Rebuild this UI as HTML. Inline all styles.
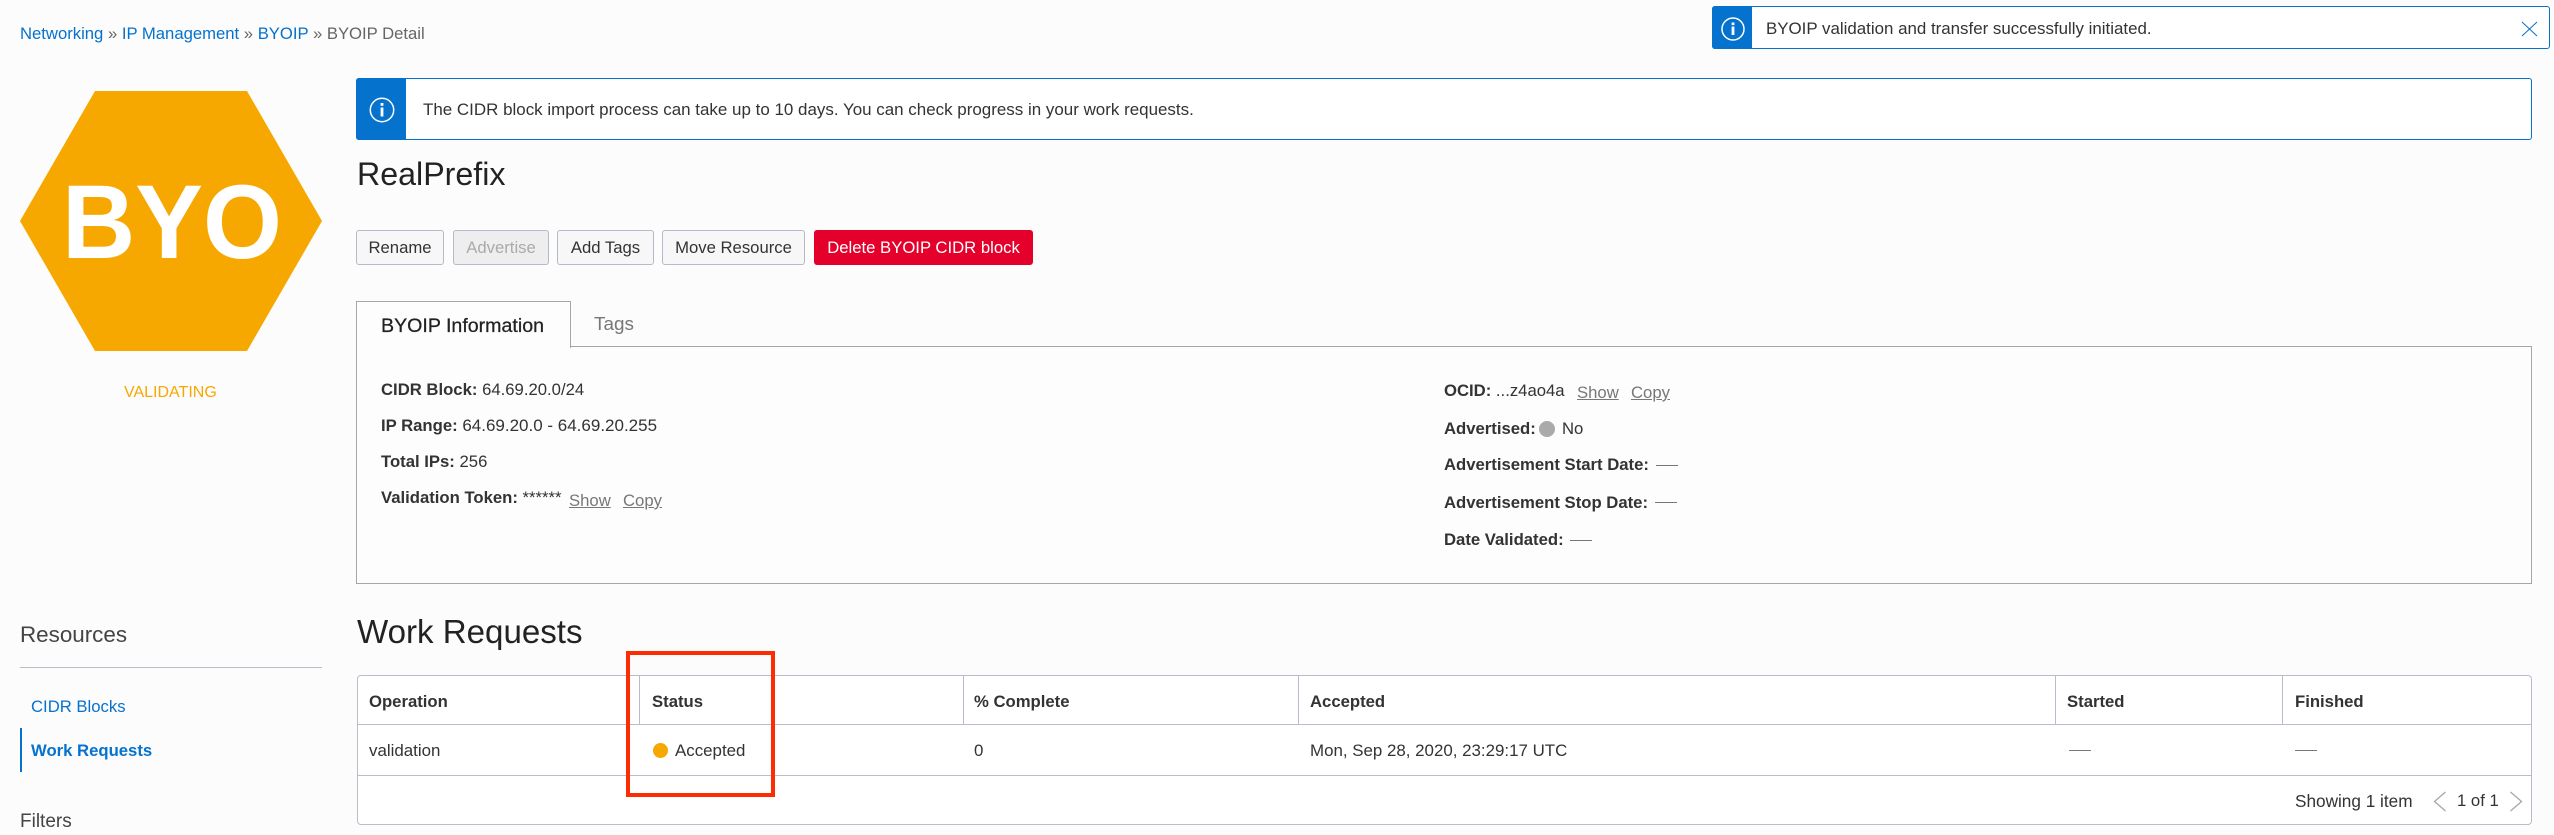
<!DOCTYPE html>
<html><head><meta charset="utf-8"><title>BYOIP Detail</title>
<style>
html,body{margin:0;padding:0;width:2554px;height:835px;overflow:hidden;background:#fcfcfc;font-family:"Liberation Sans",sans-serif;color:#333;}
.t{position:absolute;white-space:nowrap;line-height:20px;font-size:16.7px;}
.b{font-weight:bold}
.a{color:#0572ce}
.g{color:#777;text-decoration:underline}
.box{position:absolute;box-sizing:border-box}
.btn{position:absolute;box-sizing:border-box;top:230px;height:35px;border:1px solid #b4bac8;border-radius:3px;background:#f7f7f7;font-size:16.7px;line-height:33px;text-align:center;white-space:nowrap;color:#333}
.v{position:absolute;top:675px;width:1px;height:49px;background:#b9bdc9}
.d{position:absolute;width:22px;height:1px;background:#777}
</style></head><body>

<div class="t" style="left:20px;top:24px;font-size:16.67px;color:#666"><span class="a">Networking</span> » <span class="a">IP Management</span> » <span class="a">BYOIP</span> » BYOIP Detail</div>

<!-- toast -->
<div class="box" style="left:1712px;top:6px;width:838px;height:43px;border:1px solid #0572ce;border-radius:3px;background:#fff"></div>
<div class="box" style="left:1712px;top:6px;width:40px;height:43px;background:#0572ce;border-radius:3px 0 0 3px"></div>
<svg style="position:absolute;left:1720px;top:16px" width="26" height="26" viewBox="0 0 26 26"><circle cx="13" cy="13" r="11" fill="none" stroke="#fff" stroke-width="1.5"/><rect x="11.6" y="10.5" width="2.8" height="8.5" fill="#fff"/><rect x="11.6" y="6.5" width="2.8" height="2.6" fill="#fff"/></svg>
<div class="t" style="left:1766px;top:19px;font-size:16.9px">BYOIP validation and transfer successfully initiated.</div>
<svg style="position:absolute;left:2521px;top:21px" width="17" height="16" viewBox="0 0 17 16"><path d="M1 1L16 15M16 1L1 15" stroke="#0572ce" stroke-width="1" fill="none"/></svg>

<!-- hexagon -->
<svg style="position:absolute;left:0;top:0" width="340" height="360"><polygon points="95,91 247,91 322,221 247,351 95,351 20,221" fill="#f7a800"/></svg>
<div class="t b" style="left:62px;top:171px;font-size:101.5px;line-height:104px;color:#fff;transform:scaleY(1.03);transform-origin:0 85px">BYO</div>
<div class="t" style="left:124px;top:383px;font-size:16px;color:#f7a800">VALIDATING</div>

<!-- banner -->
<div class="box" style="left:356px;top:78px;width:2176px;height:62px;border:1px solid #0572ce;border-radius:3px;background:#fff"></div>
<div class="box" style="left:356px;top:78px;width:50px;height:62px;background:#0572ce;border-radius:3px 0 0 3px"></div>
<svg style="position:absolute;left:368px;top:96px" width="28" height="28" viewBox="0 0 28 28"><circle cx="14" cy="14" r="11.7" fill="none" stroke="#fff" stroke-width="1.5"/><rect x="12.6" y="11.5" width="2.8" height="9" fill="#fff"/><rect x="12.6" y="7" width="2.8" height="2.8" fill="#fff"/></svg>
<div class="t" style="left:423px;top:100px;font-size:16.97px">The CIDR block import process can take up to 10 days. You can check progress in your work requests.</div>

<div class="t" style="left:357px;top:154px;font-size:32.2px;line-height:40px;color:#222">RealPrefix</div>

<!-- buttons -->
<div class="btn" style="left:356px;width:88px">Rename</div>
<div class="btn" style="left:453px;width:96px;background:#eee;color:#aaa">Advertise</div>
<div class="btn" style="left:557px;width:97px">Add Tags</div>
<div class="btn" style="left:662px;width:143px">Move Resource</div>
<div class="btn" style="left:814px;width:219px;background:#e4002b;border-color:#e4002b;color:#fff">Delete BYOIP CIDR block</div>

<!-- tabs + panel -->
<div class="box" style="left:356px;top:346px;width:2176px;height:238px;border:1px solid #a6a6a6;background:#fdfdfd"></div>
<div class="box" style="left:356px;top:301px;width:215px;height:47px;border:1px solid #a6a6a6;border-bottom:0;background:#fdfdfd"></div>
<div class="t" style="left:381px;top:316px;font-size:19.6px;-webkit-text-stroke:.25px #222;color:#222">BYOIP Information</div>
<div class="t" style="left:594px;top:315px;font-size:18.9px;color:#777">Tags</div>

<!-- left col -->
<div class="t" style="left:381px;top:380px"><span class="b">CIDR Block:</span> 64.69.20.0/24</div>
<div class="t" style="left:381px;top:416px"><span class="b">IP Range:</span> <span style="font-size:17px">64.69.20.0 - 64.69.20.255</span></div>
<div class="t" style="left:381px;top:452px"><span class="b">Total IPs:</span> 256</div>
<div class="t" style="left:381px;top:488px"><span class="b">Validation Token:</span> ******</div>
<div class="t g" style="left:569px;top:491px">Show</div>
<div class="t g" style="left:623px;top:491px">Copy</div>

<!-- right col -->
<div class="t" style="left:1444px;top:381px"><span class="b">OCID:</span> ...z4ao4a</div>
<div class="t g" style="left:1577px;top:383px">Show</div>
<div class="t g" style="left:1631px;top:383px">Copy</div>
<div class="t b" style="left:1444px;top:419px">Advertised:</div>
<div class="box" style="left:1539px;top:421px;width:16px;height:16px;border-radius:50%;background:#aaa"></div>
<div class="t" style="left:1562px;top:419px">No</div>
<div class="t b" style="left:1444px;top:455px">Advertisement Start Date:</div><div class="d" style="left:1656px;top:465px"></div>
<div class="t b" style="left:1444px;top:493px">Advertisement Stop Date:</div><div class="d" style="left:1655px;top:502px"></div>
<div class="t b" style="left:1444px;top:530px">Date Validated:</div><div class="d" style="left:1570px;top:540px"></div>

<!-- sidebar -->
<div class="t" style="left:20px;top:625px;font-size:22.4px;color:#444">Resources</div>
<div class="box" style="left:20px;top:667px;width:302px;height:1px;background:#b9bdc9"></div>
<div class="t a" style="left:31px;top:697px">CIDR Blocks</div>
<div class="box" style="left:20px;top:728px;width:2px;height:44px;background:#0572ce"></div>
<div class="t a b" style="left:31px;top:741px">Work Requests</div>
<div class="t" style="left:20px;top:812px;font-size:19px;color:#444">Filters</div>

<!-- work requests -->
<div class="t" style="left:357px;top:613px;font-size:33.1px;line-height:40px;color:#222">Work Requests</div>
<div class="box" style="left:357px;top:675px;width:2175px;height:150px;border:1px solid #b9bdc9;border-radius:4px;background:#fff"></div>
<div class="box" style="left:357px;top:724px;width:2175px;height:1px;background:#b9bdc9"></div>
<div class="box" style="left:357px;top:775px;width:2175px;height:1px;background:#b9bdc9"></div>
<div class="v" style="left:639px"></div>
<div class="v" style="left:963px"></div>
<div class="v" style="left:1298px"></div>
<div class="v" style="left:2055px"></div>
<div class="v" style="left:2282px"></div>
<div class="t b" style="left:369px;top:692px">Operation</div>
<div class="t b" style="left:652px;top:692px">Status</div>
<div class="t b" style="left:974px;top:692px">% Complete</div>
<div class="t b" style="left:1310px;top:692px">Accepted</div>
<div class="t b" style="left:2067px;top:692px">Started</div>
<div class="t b" style="left:2295px;top:692px">Finished</div>
<div class="t" style="left:369px;top:741px;font-size:16.9px">validation</div>
<div class="box" style="left:653px;top:743px;width:15px;height:15px;border-radius:50%;background:#f7a800"></div>
<div class="t" style="left:675px;top:741px;font-size:16.9px">Accepted</div>
<div class="t" style="left:974px;top:741px;font-size:16.9px">0</div>
<div class="t" style="left:1310px;top:741px;font-size:16.9px">Mon, Sep 28, 2020, 23:29:17 UTC</div>
<div class="d" style="left:2069px;top:750px"></div>
<div class="d" style="left:2295px;top:750px"></div>
<div class="t" style="left:2295px;top:791px;font-size:17.2px">Showing 1 item</div>
<svg style="position:absolute;left:2433px;top:791px" width="14" height="21" viewBox="0 0 14 21"><path d="M12.5 1L1.5 10.5L12.5 20" fill="none" stroke="#aaa" stroke-width="1.4"/></svg>
<div class="t" style="left:2457px;top:791px">1 of 1</div>
<svg style="position:absolute;left:2509px;top:791px" width="14" height="21" viewBox="0 0 14 21"><path d="M1.5 1L12.5 10.5L1.5 20" fill="none" stroke="#aaa" stroke-width="1.4"/></svg>

<!-- red highlight -->
<div class="box" style="left:626px;top:651px;width:149px;height:146px;border:4px solid #fc2d05"></div>
</body></html>
